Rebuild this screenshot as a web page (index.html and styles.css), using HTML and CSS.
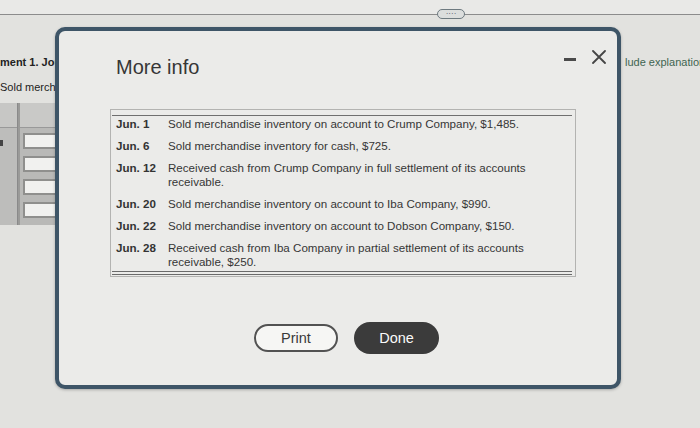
FILE: index.html
```html
<!DOCTYPE html>
<html lang="en">
<head>
<meta charset="utf-8">
<title>More info</title>
<link rel="stylesheet" href="styles.css">
</head>
<body>
<div class="topbar">
  <span class="pill">····</span>
</div>
<div class="page">
  <div class="left-col">
    <div class="req">ment 1. Journalize</div>
    <div class="sold">Sold merchandise</div>
    <div class="sheet">
      <div class="sheet-a">
        <div class="sheet-head"></div>
        <div class="sheet-mark"></div>
      </div>
      <div class="sheet-b">
        <div class="sheet-head"></div>
        <div class="inputs">
          <div class="cell"></div>
          <div class="cell"></div>
          <div class="cell"></div>
          <div class="cell"></div>
        </div>
      </div>
    </div>
  </div>
  <div class="right-col">lude explanations</div>
</div>

<div class="modal">
  <div class="modal-head">
    <h1 class="title">More info</h1>
    <div class="controls">
      <span class="minus"></span>
      <svg class="close" width="14" height="14" viewBox="0 0 14 14"><path d="M1 1 L13 13 M13 1 L1 13" stroke="#454545" stroke-width="1.8" fill="none" stroke-linecap="round"/></svg>
    </div>
  </div>
  <div class="info-box">
    <div class="info">
      <div class="d">Jun. 1</div><div class="t">Sold merchandise inventory on account to Crump Company, $1,485.</div>
      <div class="d">Jun. 6</div><div class="t">Sold merchandise inventory for cash, $725.</div>
      <div class="d">Jun. 12</div><div class="t">Received cash from Crump Company in full settlement of its accounts receivable.</div>
      <div class="d">Jun. 20</div><div class="t">Sold merchandise inventory on account to Iba Company, $990.</div>
      <div class="d">Jun. 22</div><div class="t">Sold merchandise inventory on account to Dobson Company, $150.</div>
      <div class="d">Jun. 28</div><div class="t">Received cash from Iba Company in partial settlement of its accounts receivable, $250.</div>
    </div>
  </div>
  <div class="buttons">
    <button class="btn print">Print</button>
    <button class="btn done">Done</button>
  </div>
</div>
</body>
</html>
```
FILE: styles.css
```css
html, body {
  margin: 0;
  padding: 0;
}
body {
  width: 700px;
  height: 428px;
  overflow: hidden;
  position: relative;
  background: #e2e2df;
  font-family: "Liberation Sans", Arial, sans-serif;
  color: #333;
}
.topbar {
  height: 14px;
  background: #e9e9e7;
  border-bottom: 1px solid #8c8c8c;
  position: relative;
}
.pill {
  position: absolute;
  left: 437px;
  top: 9px;
  width: 26px;
  height: 8px;
  border: 1px solid #6e7a80;
  border-radius: 5px;
  background: #dcdedd;
  font-size: 8px;
  line-height: 7px;
  text-align: center;
  color: #445;
}
.page {
  display: flex;
  justify-content: space-between;
}
.left-col {
  width: 62px;
  white-space: nowrap;
}
.req {
  margin-top: 40px;
  font-size: 11px;
  line-height: 14px;
  font-weight: bold;
  color: #222;
}
.sold {
  margin-top: 11px;
  font-size: 11px;
  line-height: 14px;
  color: #222;
}
.sheet {
  margin-top: 9px;
  display: flex;
  height: 122px;
  width: 62px;
}
.sheet-head {
  height: 24px;
  background: #c9c9c7;
  border-bottom: 1px solid #999;
}
.sheet-a {
  width: 17px;
  background: #bdbdbb;
  border-right: 1px solid #8a8a8a;
}
.sheet-a .sheet-head {
  background: #c7c7c5;
}
.sheet-mark {
  width: 3px;
  height: 6px;
  margin-top: 12px;
  background: #444;
}
.sheet-b {
  flex: 1;
  background: #b9b9b7;
  border-left: 2px solid #9a9a98;
}
.inputs {
  display: flex;
  flex-direction: column;
  gap: 7px;
  padding: 5px 0 0 3px;
}
.cell {
  height: 12px;
  background: #f1f1ef;
  border: 2px solid #8f8f8d;
}
.right-col {
  width: 75px;
  margin-top: 40px;
  white-space: nowrap;
  font-size: 11px;
  line-height: 14px;
  color: #3f6551;
}

.modal {
  position: absolute;
  left: 55px;
  top: 27px;
  width: 558px;
  height: 354px;
  border: 4px solid #3e5567;
  border-radius: 10px;
  background: #ebebe9;
  box-shadow: 0 1px 3px rgba(0,0,0,0.25);
}
.modal-head {
  display: flex;
  justify-content: space-between;
  align-items: flex-start;
  padding: 24px 11px 0 57px;
}
.title {
  margin: 0;
  font-size: 20px;
  line-height: 24px;
  font-weight: normal;
  color: #363636;
}
.controls {
  display: flex;
  align-items: center;
  gap: 16px;
  margin-top: -5px;
}
.minus {
  display: block;
  width: 12px;
  height: 3px;
  background: #4a4a4a;
  margin-top: 4px;
}
.close {
  display: block;
}
.info-box {
  margin: 30px 41px 0 51px;
  border: 1px solid #b3b3b1;
  padding: 5px 3px 1px 1px;
}
.info {
  border-top: 1px solid #6f6f6f;
  border-bottom: 4px double #6a6a6a;
  padding: 1px 0 2px;
  display: grid;
  grid-template-columns: 56px 370px;
  row-gap: 8px;
  font-size: 11.6px;
  line-height: 14px;
}
.d {
  padding-left: 4px;
  font-weight: bold;
  color: #333;
}
.t {
  color: #363636;
}
.buttons {
  display: flex;
  align-items: center;
  gap: 16px;
  padding-left: 195px;
  margin-top: 45px;
}
.btn {
  font-family: "Liberation Sans", Arial, sans-serif;
  font-size: 14.5px;
  cursor: pointer;
  padding: 0;
}
.print {
  width: 84px;
  height: 28px;
  border: 2px solid #525252;
  border-radius: 14px;
  background: #f6f6f4;
  color: #3a3a3a;
}
.done {
  width: 85px;
  height: 32px;
  border: none;
  border-radius: 16px;
  background: #3b3b3b;
  color: #fafafa;
}
```
